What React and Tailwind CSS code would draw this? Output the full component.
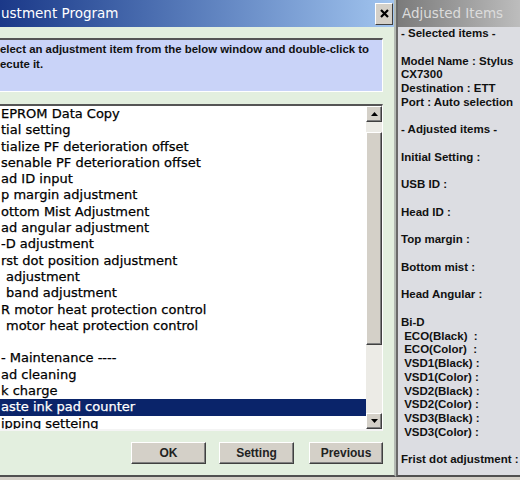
import React from 'react'

const sans = { fontFamily: '"Liberation Sans", Arial, sans-serif' }
const verd = { fontFamily: '"DejaVu Sans", Verdana, sans-serif' }

// the window is cut by the left edge of the picture, so only the visible part of each label is kept
const items = [
  { t: 'EPROM Data Copy' },
  { t: 'tial setting' },
  { t: 'tialize PF deterioration offset' },
  { t: 'senable PF deterioration offset' },
  { t: 'ad ID input' },
  { t: 'p margin adjustment' },
  { t: 'ottom Mist Adjustment' },
  { t: 'ad angular adjustment' },
  { t: '-D adjustment' },
  { t: 'rst dot position adjustment' },
  { t: 'adjustment', pad: true },
  { t: 'band adjustment', pad: true },
  { t: 'R motor heat protection control' },
  { t: 'motor heat protection control', pad: true },
  { t: '' },
  { t: '- Maintenance ----' },
  { t: 'ad cleaning' },
  { t: 'k charge' },
  { t: 'aste ink pad counter', selected: true },
  { t: 'ipping setteing' },
]

const summary = [
  '- Selected items -',
  '',
  'Model Name : Stylus',
  'CX7300',
  'Destination : ETT',
  'Port : Auto selection',
  '',
  '- Adjusted items -',
  '',
  'Initial Setting :',
  '',
  'USB ID :',
  '',
  'Head ID :',
  '',
  'Top margin :',
  '',
  'Bottom mist :',
  '',
  'Head Angular :',
  '',
  'Bi-D',
  ' ECO(Black)  :',
  ' ECO(Color)  :',
  ' VSD1(Black) :',
  ' VSD1(Color) :',
  ' VSD2(Black) :',
  ' VSD2(Color) :',
  ' VSD3(Black) :',
  ' VSD3(Color) :',
  '',
  'Frist dot adjustment :',
]

function Arrow({ down }) {
  return (
    <svg width="7" height="4" viewBox="0 0 7 4">
      {down ? <path d="M0 0h7L3.5 4z" fill="#000" /> : <path d="M0 4h7L3.5 0z" fill="#000" />}
    </svg>
  )
}

function ScrollButton({ down }) {
  return (
    <div className="flex h-[16px] w-[16px] items-center justify-center border border-t-white border-l-white border-r-[#404040] border-b-[#404040] bg-[#d4d0c8] shadow-[inset_-1px_-1px_0_#808080]">
      <Arrow down={down} />
    </div>
  )
}

function Button({ label, className }) {
  return (
    <button
      type="button"
      style={sans}
      className={`flex h-[22px] items-center justify-center border border-t-white border-l-white border-r-[#404040] border-b-[#404040] bg-[#d4d0c8] text-[12px] font-bold text-[#222] shadow-[inset_-1px_-1px_0_#808080] ${className}`}
    >
      {label}
    </button>
  )
}

export default function App() {
  return (
    <div className="flex h-[480px] w-[520px] overflow-hidden bg-[#d4d0c8]">
      <section className="flex h-[477px] w-[396px] shrink-0 flex-col border-r-2 border-b-2 border-r-[#b4bab4] border-b-[#505050]">
        <header className="flex h-[27px] shrink-0 items-center justify-between bg-linear-to-r from-[#1b3888] to-[#a2c5ef]">
          <span style={verd} className="pl-[1px] text-[13.5px] text-white">ustment Program</span>
          <div className="mr-[1px] flex h-[22px] w-[18px] items-center justify-center border border-t-white border-l-white border-r-[#404040] border-b-[#404040] bg-[#d4d0c8]">
            <svg width="9" height="9" viewBox="0 0 9 9">
              <path d="M1 1l7 7M8 1L1 8" stroke="#000" strokeWidth="2.2" />
            </svg>
          </div>
        </header>

        <div className="flex flex-1 flex-col bg-[#e3efdf] pr-[11px]">
          <div
            style={sans}
            className="mt-[11px] h-[54px] border-t-2 border-r border-b border-t-[#555] border-r-white border-b-white bg-[#c9d3f8] pt-[2px] text-[11.4px] leading-[15px] font-bold text-[#111]"
          >
            <p>elect an adjustment item from the below window and double-click to</p>
            <p>ecute it.</p>
          </div>

          <div className="mt-[12px] flex h-[327px] border-t-2 border-r border-b-2 border-t-[#555] border-r-white border-b-[#f4f4f4] bg-white">
            <ul style={verd} className="flex-1 overflow-hidden text-[13px] leading-[16.3px] text-black [-webkit-text-stroke:0.25px_currentColor]">
              {items.map((item, i) => (
                <li
                  key={i}
                  className={`h-[16.3px] whitespace-pre ${item.pad ? 'pl-[6px]' : 'pl-[1px]'} ${item.selected ? 'bg-[#0a246a] text-white' : ''}`}
                >
                  {item.t}
                </li>
              ))}
            </ul>
            <div className="flex w-[16px] flex-col bg-[#ecebe6]">
              <ScrollButton />
              <div className="h-[10px]" />
              <div className="h-[213px] border border-t-white border-l-white border-r-[#404040] border-b-[#404040] bg-[#d4d0c8] shadow-[inset_-1px_-1px_0_#808080]" />
              <div className="flex-1" />
              <ScrollButton down />
            </div>
          </div>

          <div className="mt-[11px] flex">
            <Button label="OK" className="ml-[131px] w-[75px]" />
            <Button label="Setting" className="ml-[13px] w-[75px]" />
            <Button label="Previous" className="ml-[15px] w-[74px]" />
          </div>
        </div>
      </section>

      <aside className="flex h-[477px] flex-1 flex-col border-l-2 border-b-2 border-l-[#6a6a6a] border-b-[#505050]">
        <header className="flex h-[27px] shrink-0 items-center bg-linear-to-r from-[#7b7b7b] to-[#bdbdbd] pl-[4px]">
          <span style={verd} className="text-[13.5px] text-[#dcdcdc]">Adjusted Items</span>
        </header>
        <div style={sans} className="flex-1 bg-[#dcdde2] pl-[3px] text-[11.5px] leading-[13.75px] font-bold text-[#111]">
          {summary.map((line, i) => (
            <p key={i} className="h-[13.75px] whitespace-pre">{line}</p>
          ))}
        </div>
      </aside>
    </div>
  )
}
